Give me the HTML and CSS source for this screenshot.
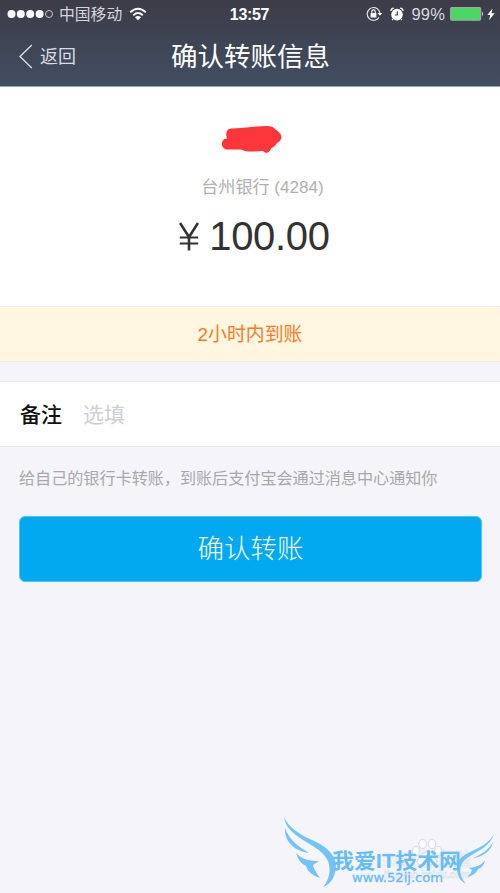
FILE: index.html
```
<!DOCTYPE html>
<html lang="zh-CN">
<head>
<meta charset="utf-8">
<title>确认转账信息</title>
<link rel="stylesheet" href="styles.css">
</head>
<body>
<header class="header">
  <div class="status">
    <div class="status-left">
      <svg width="46" height="12" viewBox="0 0 46 12" fill="#fff"><circle cx="4.5" cy="6" r="4"/><circle cx="13.8" cy="6" r="4"/><circle cx="23.2" cy="6" r="4"/><circle cx="32.6" cy="6" r="4"/><circle cx="42" cy="6" r="3.5" fill="none" stroke="#d4d5d9" stroke-width=".9"/></svg>
      <span class="carrier">中国移动</span>
      <svg class="wifi" width="18" height="14" viewBox="0 0 18 14" fill="none" stroke="#fff" stroke-width="1.9"><path d="M1.2 5.2Q9-1.8 16.8 5.2M4.2 8.2Q9 3.8 13.8 8.2"/><path d="M6 10.2Q9 7.6 12 10.2L9 13.2Z" fill="#fff" stroke="none"/></svg>
    </div>
    <div class="clock">13:57</div>
    <div class="status-right">
      <svg width="17" height="16" viewBox="0 0 17 16"><path d="M13.2 4.8A6.4 6.4 0 1 0 13 11.4M13 4.5Q13.9 6 13.9 8" fill="none" stroke="#dedfe3" stroke-width="1.2"/><path d="M11.5 7H16.3L13.9 9.8Z" fill="#fff"/><rect x="4.6" y="7" width="5.8" height="4.4" rx=".5" fill="#fff"/><path d="M5.8 7V5.6a1.7 1.7 0 0 1 3.4 0V7" fill="none" stroke="#fff" stroke-width="1.1"/></svg>
      <svg class="alarm" width="14" height="15" viewBox="0 0 14 15"><circle cx="7" cy="7.6" r="5.8" fill="#fff"/><path d="M.9 4Q1 1.4 3.8 1.2M10.2 1.2Q13 1.4 13.1 4" fill="none" stroke="#fff" stroke-width="1.2"/><path d="M3 12L2.2 13.2M11 12L11.8 13.2" stroke="#fff" stroke-width="1.4"/><path d="M7.3 4.2V8H4.8" fill="none" stroke="#444855" stroke-width="1.2"/></svg>
      <span class="percent">99%</span>
      <svg class="battery" width="34" height="14" viewBox="0 0 34 14"><rect x=".6" y=".6" width="30" height="12.6" rx="1.5" fill="#49d862" stroke="#a3a4aa" stroke-width="1.3"/><path d="M32 4.5q2 2.3 0 4.8z" fill="#e5e5e8"/></svg>
      <svg class="bolt" width="8" height="13" viewBox="0 0 8 13"><path d="M5.5.5L.3 7H3.3L2 12.3 7.7 5.3H4.5Z" fill="#fff"/></svg>
    </div>
  </div>
  <nav class="nav">
    <div class="back"><svg width="14" height="25" viewBox="0 0 14 25" fill="none" stroke="#d8dbe1" stroke-width="1.4"><path d="M12.8 1L1 12.5 12.8 24"/></svg><span>返回</span></div>
    <h1>确认转账信息</h1>
  </nav>
</header>
<main>
  <section class="summary">
    <svg class="scribble" width="61" height="30" viewBox="0 0 61 30"><path d="M6 6Q7 3 11 3.5L20 3 35 1.500 46 1Q52 1 54 4Q60 8 60.500 12Q60 16 56 18Q54 22 50 23.500Q48 29 44 27.500L42 26Q30 27 24 26L20 24.500H5Q0 22 1 17.500Q2 13.500 6 13.500Q4.500 9 6 6Z" fill="#fd3639"/></svg>
    <div class="bank">台州银行 <span>(4284)</span></div>
    <div class="amount"><svg width="20" height="29" viewBox="0 0 20 29" fill="none" stroke="#333" stroke-width="2.6"><path d="M1 1L10 15 19 1M10 14V28.5" /><path d="M.8 15.5H19.2M.8 21.5H19.2" stroke-width="2"/></svg><span>100.00</span></div>
  </section>
  <div class="arrival">2小时内到账</div>
  <label class="remark"><span class="remark-label">备注</span><span class="remark-hint">选填</span></label>
  <p class="note">给自己的银行卡转账，到账后支付宝会通过消息中心通知你</p>
  <button class="confirm">确认转账</button>
</main>
<svg class="watermark" width="230" height="93" viewBox="0 0 230 93">
  <text class="faint" x="113" y="66" font-size="18" textLength="88" lengthAdjust="spacingAndGlyphs">Bai百度经验</text>
  <text class="faint" x="114" y="78" font-size="11" textLength="86" lengthAdjust="spacingAndGlyphs">jingyan.baidu.com</text>
  <g fill="#fbfbfd" stroke="#d8d8dd" stroke-width="1"><ellipse cx="146" cy="51" rx="3.4" ry="4.5"/><ellipse cx="152.500" cy="44" rx="3.800" ry="4.800"/><ellipse cx="162" cy="44" rx="3.800" ry="4.800"/><ellipse cx="168" cy="51" rx="3.4" ry="4.500"/><path d="M157 51Q163 53 167 61Q167 67 157 64Q147 67 147 61Q151 53 157 51Z"/></g>
  <g fill="#72c4f8">
    <path d="M14 17C19 28 29 34 41 39.500C54 45 62 52 65 60C68 71 63 84 53 87C60 79 61 69 58 61C53 51 43 46 33 40C22 33 15 26 14 17Z"/>
    <path d="M15 28C19 39 27 46 39 53C25 51 14 42 15 28Z"/>
    <path d="M26 53C32 59 38 61 49 61L43 65Q44 70 50 78Q38 74 36 66Q29 63 26 53Z"/>
    <path d="M224 34C219 43 211 47 202 51C191 56 186 61 187 68C187 75 190 81 196 84C191 78 189 71 191 66C193 60 198 57 205 53C214 48 221 43 224 34Z"/>
    <path d="M223 42C221 51 213 57 203 58C213 54 219 49 223 42Z"/>
    <path d="M215 60C212 65 207 67 199 68L202 70Q201 74 197 77Q206 75 208 69Q214 67 215 60Z"/>
  </g>
  <text class="brand" x="62" y="68" font-size="21" textLength="129" lengthAdjust="spacingAndGlyphs">我爱IT技术网</text>
  <text class="site" x="82" y="82" font-size="12" textLength="91" lengthAdjust="spacingAndGlyphs">www.52ij.com</text>
</svg>
</body>
</html>
```
FILE: styles.css
```
* { box-sizing: border-box; }
body {
  margin: 0;
  min-height: 893px;
  position: relative;
  background: #f4f4f9;
  font-family: "Liberation Sans", "Noto Sans CJK SC", sans-serif;
}
svg { display: block; flex: none; }
.header {
  height: 87px;
  background: linear-gradient(#3c3c48, #414e61);
  border-bottom: 1px solid #a0a7b0;
  color: #fff;
}
.status {
  height: 28px;
  display: grid;
  grid-template-columns: 1fr auto 1fr;
  grid-template-rows: 28px;
  align-items: center;
  padding: 0 5px 0 7px;
  font-size: 16px;
  line-height: 28px;
}
.status-left, .status-right { display: flex; align-items: center; height: 28px; }
.status-right { justify-content: flex-end; }
.carrier { margin-left: 6px; padding-top: 1px; color: #d4d5da; font-weight: 400; font-size: 15.8px; }
.wifi { margin-left: 7px; }
.clock { font-size: 16px; font-weight: bold; letter-spacing: -.3px; margin-right: 3px; padding-top: 1px; }
.alarm { margin-left: 7px; }
.percent { margin-left: 7px; color: #d8d9de; font-size: 16.5px; letter-spacing: .2px; }
.battery { margin-left: 5px; }
.bolt { margin-left: 3px; }
.nav {
  height: 56px;
  display: grid;
  grid-template-columns: 152px 1fr 152px;
  align-items: center;
  padding: 0 0 0 19px;
  margin-right: 19px;
}
.back { display: flex; align-items: center; gap: 7px; color: #d8dbe1; font-size: 18px; line-height: 28px; }
.back span { padding-top: 2px; }
.nav h1 { margin: 0; padding-top: 1px; font-size: 26.5px; line-height: 40px; font-weight: 400; white-space: nowrap; }
.summary {
  height: 219px;
  padding-top: 38px;
  background: #fff;
  display: flex;
  flex-direction: column;
  align-items: center;
}
.scribble { margin-left: 3px; }
.bank { margin: 19px 0 0 25px; height: 28px; line-height: 28px; font-size: 17.1px; color: #b0b0b0; font-weight: 400; white-space: nowrap; }
.amount { display: flex; align-items: center; gap: 10px; margin: 12px 0 0 9px; height: 44px; line-height: 44px; font-size: 40px; letter-spacing: -.3px; color: #333; }
.amount span { margin-top: -1px; }
.arrival {
  height: 56px;
  background: #fff7e0;
  border: solid #eeede9;
  border-width: 1px 0;
  color: #ff7a27;
  text-align: center;
  font-size: 18.9px;
  line-height: 56px;
}
.remark {
  margin-top: 19px;
  height: 66px;
  border: solid #e9e9ed;
  border-width: 1px 0;
  background: #fff;
  padding: 1px 20px 0;
  display: flex;
  align-items: center;
  gap: 21px;
  font-size: 21px;
  line-height: 64px;
}
.remark-label { font-weight: 500; color: #111; }
.remark-hint { font-weight: 400; color: #cfcfd3; }
.note { margin: 15px 19px 0; height: 32px; line-height: 32px; font-size: 16.1px; color: #a8a8ab; white-space: nowrap; }
.confirm {
  display: block;
  width: 463px;
  height: 66px;
  margin: 22px 0 0 19px;
  padding: 0;
  border: 1px solid #55c3f2;
  border-radius: 6px;
  background: #03a9f0;
  color: #f2fbff;
  font: 300 26.5px/64px "Liberation Sans", "Noto Sans CJK SC", sans-serif;
}
.watermark { position: absolute; left: 270px; top: 800px; }
.faint { fill: #f7f7fa; stroke: #dcdce1; stroke-width: .5px; font-weight: 700; }
.brand { fill: #66bdf7; font-weight: 700; }
.site { fill: #66bdf7; stroke: #66bdf7; stroke-width: .3px; font-family: "DejaVu Sans", sans-serif; }
```
